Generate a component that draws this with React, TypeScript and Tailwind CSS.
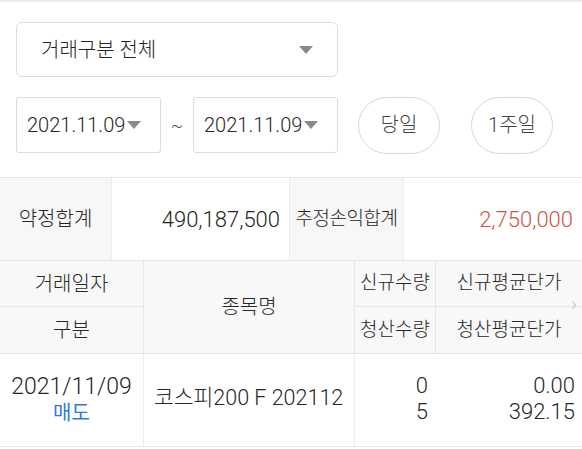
import React from "react";

const font = { fontFamily: 'Roboto, "Noto Sans CJK KR", "Noto Sans", sans-serif' };

function Tri({ className = "" }: { className?: string }) {
  return (
    <svg width="14" height="8" viewBox="0 0 14 8" className={className}>
      <path d="M0 0 L14 0 L7 8 Z" fill="#8a8a8a" />
    </svg>
  );
}

export default function App() {
  return (
    <div className="w-[582px] h-[449px] bg-white text-[#262626] font-light overflow-hidden" style={font}>
      <div className="h-[2px] bg-[#ececec]" />
      <div className="px-4 pt-5">
        <div className="w-[322px] h-[55px] border border-[#dedede] rounded-md flex items-center justify-between pl-6 pr-6">
          <span className="text-[20px]">거래구분 전체</span>
          <Tri />
        </div>
        <div className="flex items-center mt-5 h-[56px]">
          <div className="w-[145px] h-[56px] border border-[#dcdcdc] rounded-[3px] flex items-center pl-[10px] gap-[2px]">
            <span className="text-[20px]">2021.11.09</span>
            <Tri />
          </div>
          <span className="w-[32px] text-center text-[18px] text-[#555]">~</span>
          <div className="w-[145px] h-[56px] border border-[#dcdcdc] rounded-[3px] flex items-center pl-[10px] gap-[2px]">
            <span className="text-[20px]">2021.11.09</span>
            <Tri />
          </div>
          <div className="ml-5 w-[82px] h-[57px] border border-[#d8d8d8] rounded-full flex items-center justify-center text-[20px] text-[#444]">당일</div>
          <div className="ml-[31px] w-[82px] h-[57px] border border-[#d8d8d8] rounded-full flex items-center justify-center text-[20px] text-[#444]">1주일</div>
        </div>
      </div>
      <div className="mt-6 border-t border-b border-[#e6e6e6] grid grid-cols-[112px_178px_114px_1fr] h-[84px]">
        <div className="bg-[#f7f7f7] border-r border-[#ececec] flex items-center justify-center text-[20px]">약정합계</div>
        <div className="border-r border-[#ececec] flex items-center justify-end pr-[9px] text-[22px]">490,187,500</div>
        <div className="bg-[#f7f7f7] border-r border-[#ececec] flex items-center justify-center text-[19px] tracking-[-0.5px]">추정손익합계</div>
        <div className="flex items-center justify-end pr-[9px] text-[22px] text-[#d2553f]">2,750,000</div>
      </div>
      <div className="relative grid grid-cols-[144px_211px_81px_1fr] grid-rows-[46px_46px] border-b border-[#e6e6e6] bg-[#f8f8f8] text-[20px]">
        <div className="border-r border-b border-[#e6e6e6] flex items-center justify-center">거래일자</div>
        <div className="row-span-2 border-r border-[#e6e6e6] flex items-center justify-center">종목명</div>
        <div className="border-r border-b border-[#e6e6e6] flex items-center justify-center text-[19px]">신규수량</div>
        <div className="border-b border-[#e6e6e6] flex items-center justify-center text-[19px]">신규평균단가</div>
        <div className="border-r border-[#e6e6e6] flex items-center justify-center">구분</div>
        <div className="border-r border-[#e6e6e6] flex items-center justify-center text-[19px]">청산수량</div>
        <div className="flex items-center justify-center text-[19px]">청산평균단가</div>
        <span className="absolute right-[5px] top-[33px] text-[20px] leading-[20px] text-[#c4c4c4]">›</span>
      </div>
      <div className="grid grid-cols-[144px_211px_81px_1fr] h-[93px] border-b border-[#e6e6e6]">
        <div className="border-r border-[#ececec] flex flex-col items-center justify-center leading-[26px]">
          <span className="text-[23px]">2021/11/09</span>
          <span className="text-[20px] text-[#2f7bd3] font-normal">매도</span>
        </div>
        <div className="border-r border-[#ececec] flex items-center pl-[10px] pb-[4px] text-[21.5px]">코스피200 F 202112</div>
        <div className="flex flex-col items-end justify-center pr-[8px] text-[22px] leading-[26px] pb-[2px]">
          <span>0</span>
          <span>5</span>
        </div>
        <div className="flex flex-col items-end justify-center pr-[7px] text-[22px] leading-[26px] pb-[2px]">
          <span>0.00</span>
          <span>392.15</span>
        </div>
      </div>
    </div>
  );
}
